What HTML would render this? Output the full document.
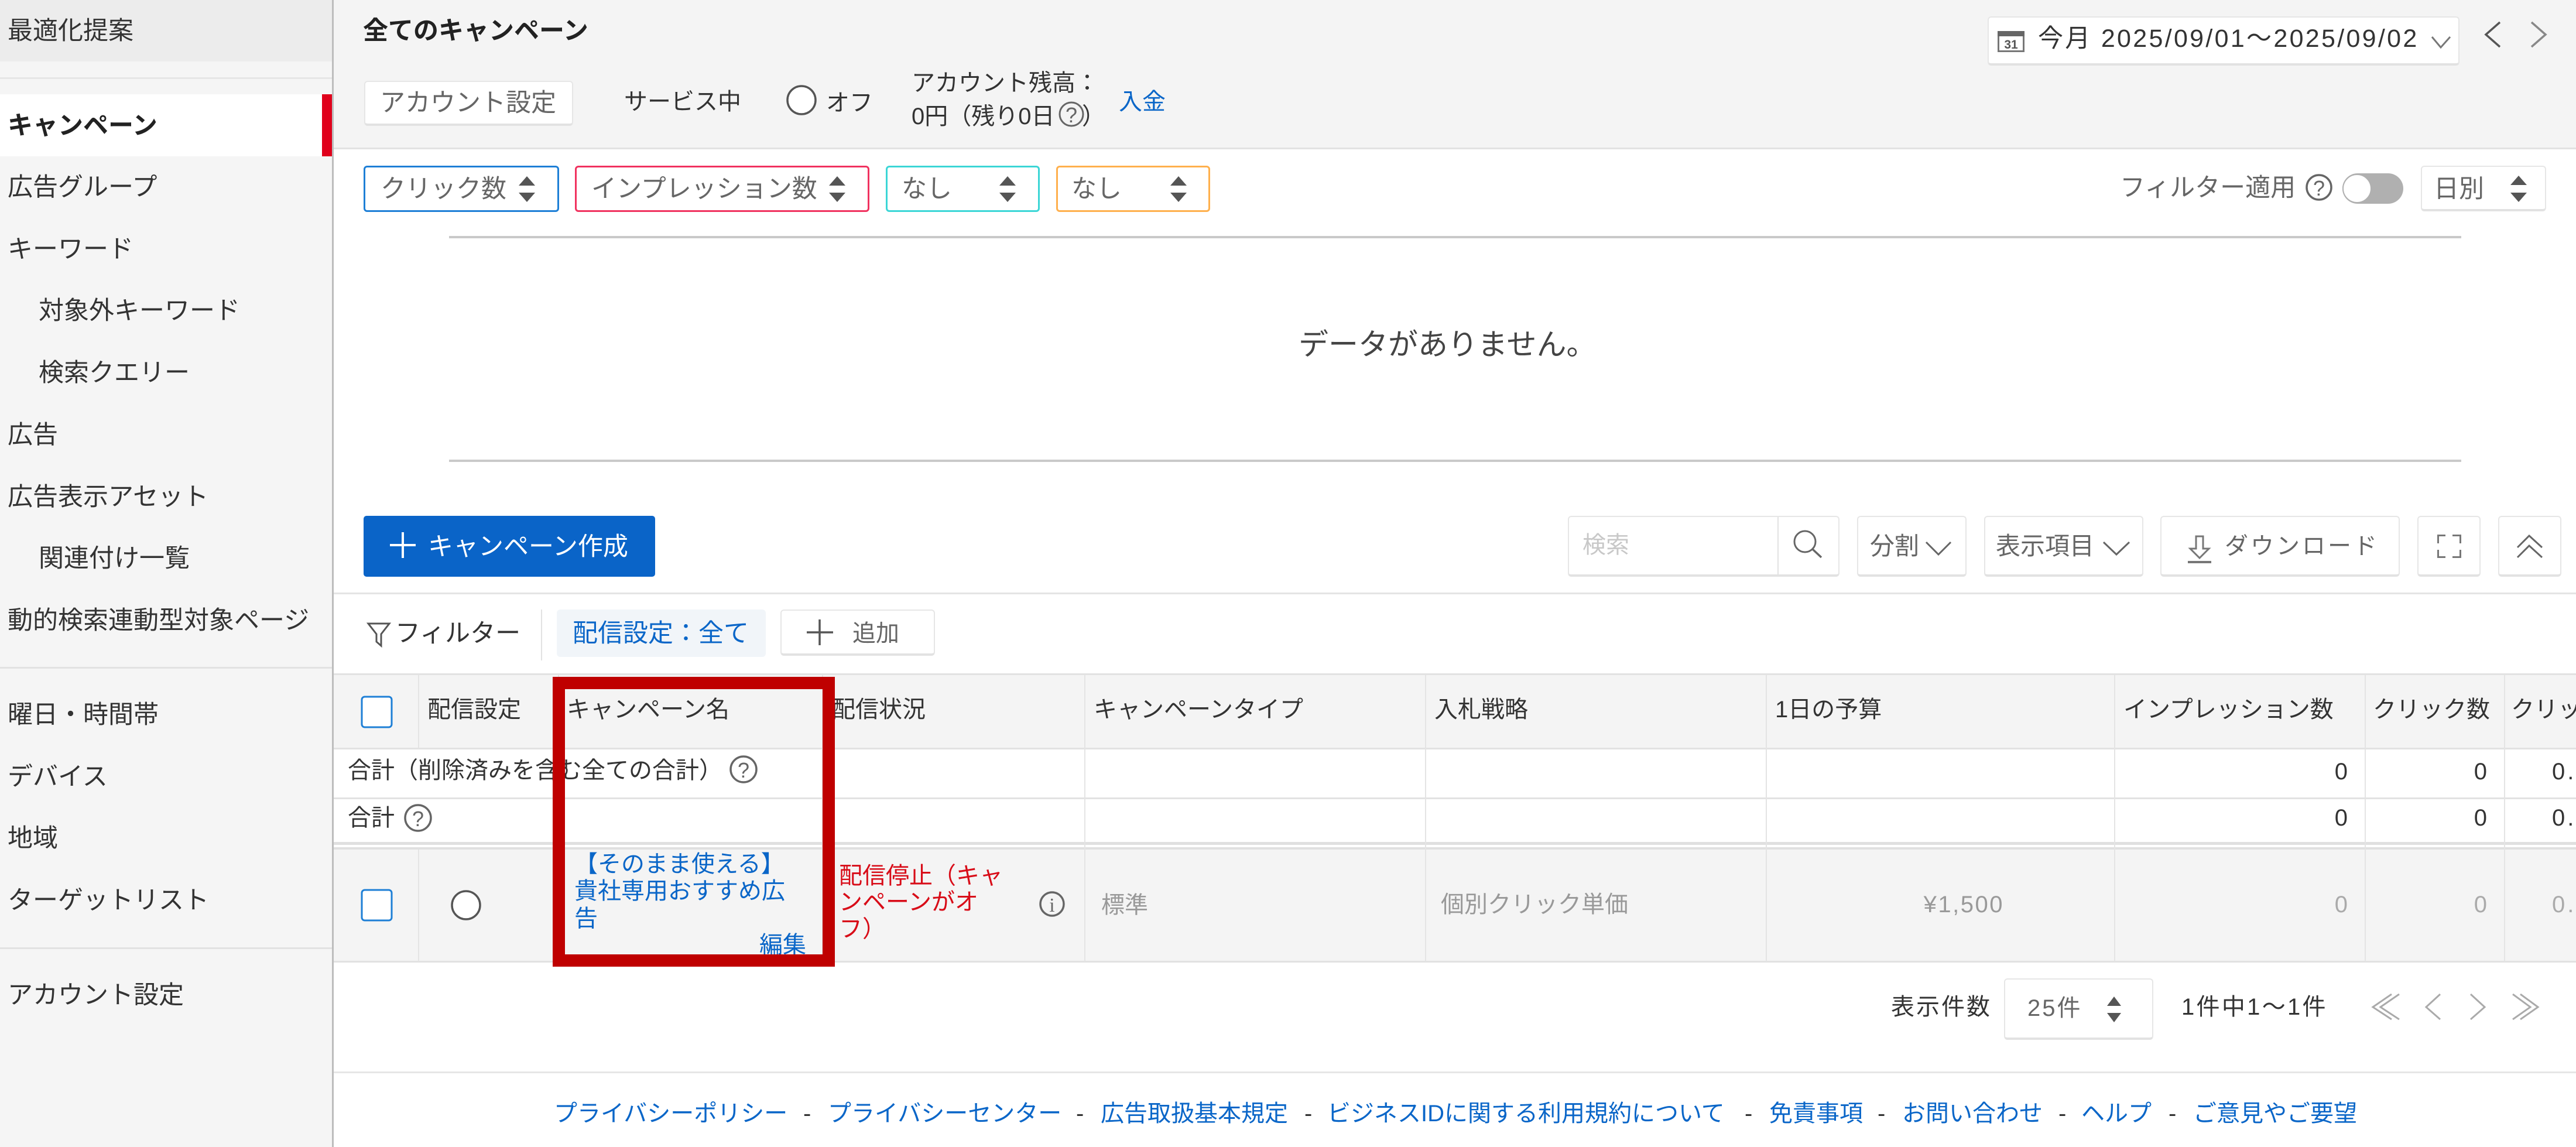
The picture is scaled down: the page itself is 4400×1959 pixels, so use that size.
<!DOCTYPE html>
<html lang="ja">
<head>
<meta charset="utf-8">
<title>全てのキャンペーン</title>
<style>
html,body{margin:0;padding:0;background:#fff}
body{position:relative;width:4400px;height:1959px;overflow:hidden;font-family:"Liberation Sans","Noto Sans CJK JP",sans-serif;font-size:43px;color:#333}
.t{position:absolute;white-space:nowrap;height:60px;line-height:60px;margin-top:-27px;margin-left:-2px}
.b{position:absolute;box-sizing:border-box}
.btn{position:absolute;box-sizing:border-box;background:#fff;border:2px solid #e6e6e6;border-bottom:4px solid #e2e2e2;border-radius:6px}
.chip{position:absolute;box-sizing:border-box;background:#fff;border-radius:6px;top:283px;height:79px;border-width:3px;border-style:solid}
.s{font-size:40px;margin-top:-30px;margin-left:0}
.g{color:#666}
.k{color:#333}
.l{color:#0a66c8}
.f{font-size:40px;color:#0a66c8;margin-top:-30px;margin-left:0}
.d{font-size:40px;color:#333;margin-top:-30px;margin-left:0}
.n{position:absolute;white-space:nowrap;height:60px;line-height:60px;margin-top:-30px;text-align:right;font-size:40px}
svg{position:absolute;left:0;top:0}
</style>
</head>
<body>
<!-- sidebar -->
<div class="b" style="left:0;top:0;width:567px;height:1959px;background:#f5f5f5"></div>
<div class="b" style="left:567px;top:0;width:3px;height:1959px;background:#bdbdbd"></div>
<div class="b" style="left:0;top:0;width:567px;height:105px;background:#ececec"></div>
<div class="b" style="left:0;top:132px;width:567px;height:3px;background:#e6e6e6"></div>
<div class="b" style="left:0;top:161px;width:567px;height:106px;background:#fff"></div>
<div class="b" style="left:550px;top:161px;width:17px;height:106px;background:#e0001b"></div>
<div class="b" style="left:0;top:1139px;width:567px;height:3px;background:#e2e2e2"></div>
<div class="b" style="left:0;top:1618px;width:567px;height:3px;background:#e2e2e2"></div>
<div class="t" style="left:15px;top:50px">最適化提案</div>
<div class="t" style="left:15px;top:212px;font-weight:700;color:#222">キャンペーン</div>
<div class="t" style="left:15px;top:317px">広告グループ</div>
<div class="t" style="left:15px;top:423px">キーワード</div>
<div class="t" style="left:68px;top:528px">対象外キーワード</div>
<div class="t" style="left:68px;top:634px">検索クエリー</div>
<div class="t" style="left:15px;top:740px">広告</div>
<div class="t" style="left:15px;top:846px">広告表示アセット</div>
<div class="t" style="left:68px;top:951px">関連付け一覧</div>
<div class="t" style="left:15px;top:1057px">動的検索連動型対象ページ</div>
<div class="t" style="left:15px;top:1218px">曜日・時間帯</div>
<div class="t" style="left:15px;top:1324px">デバイス</div>
<div class="t" style="left:15px;top:1429px">地域</div>
<div class="t" style="left:15px;top:1535px">ターゲットリスト</div>
<div class="t" style="left:15px;top:1697px">アカウント設定</div>

<!-- top header -->
<div class="b" style="left:570px;top:0;width:3830px;height:252px;background:#f4f4f4"></div>
<div class="b" style="left:570px;top:252px;width:3830px;height:3px;background:#e2e2e2"></div>
<div class="t" style="left:622px;top:50px;font-weight:700;color:#222">全てのキャンペーン</div>
<div class="btn" style="left:622px;top:138px;width:357px;height:77px"></div>
<div class="t g" style="left:651px;top:173px">アカウント設定</div>
<div class="t k" style="left:1068px;top:171px;font-size:40px">サービス中</div>
<div class="t k" style="left:1413px;top:173px;font-size:40px">オフ</div>
<div class="t k" style="left:1559px;top:139px;font-size:40px">アカウント残高：</div>
<div class="t k" style="left:1559px;top:196px;font-size:40px">0円（残り0日</div>
<div class="t k" style="left:1850px;top:196px;font-size:40px">）</div>
<div class="t l" style="left:1913px;top:171px;font-size:40px">入金</div>

<div class="btn" style="left:3395px;top:28px;width:806px;height:84px"></div>
<div class="t k" style="left:3483px;top:63px;letter-spacing:3.3px">今月 2025/09/01～2025/09/02</div>

<!-- chart controls -->
<div class="chip" style="left:621px;width:334px;border-color:#1e7fd6"></div>
<div class="chip" style="left:982px;width:503px;border-color:#f0325f"></div>
<div class="chip" style="left:1513px;width:263px;border-color:#3cd6d6"></div>
<div class="chip" style="left:1804px;width:263px;border-color:#ffb04d"></div>
<div class="t g" style="left:652px;top:320px">クリック数</div>
<div class="t g" style="left:1012px;top:320px">インプレッション数</div>
<div class="t g" style="left:1542px;top:320px">なし</div>
<div class="t g" style="left:1832px;top:320px">なし</div>
<div class="t g" style="left:3623px;top:318px;font-size:43px">フィルター適用</div>
<div class="btn" style="left:4135px;top:283px;width:214px;height:78px"></div>
<div class="t g" style="left:4159px;top:320px">日別</div>

<!-- chart -->
<div class="b" style="left:767px;top:403px;width:3437px;height:4px;background:#c9c9c9"></div>
<div class="b" style="left:767px;top:785px;width:3437px;height:4px;background:#c9c9c9"></div>
<div class="t" style="left:2220px;top:586px;font-size:51px;color:#444">データがありません。</div>

<!-- toolbar -->
<div class="b" style="left:621px;top:881px;width:498px;height:104px;background:#0a64c8;border-radius:5px"></div>
<div class="t" style="left:733px;top:931px;color:#fff">キャンペーン作成</div>
<div class="btn" style="left:2678px;top:881px;width:464px;height:104px"></div>
<div class="b" style="left:3036px;top:883px;width:2px;height:100px;background:#e2e2e2"></div>
<div class="t" style="left:2705px;top:928px;font-size:40px;color:#c8c8c8">検索</div>
<div class="btn" style="left:3172px;top:881px;width:187px;height:104px"></div>
<div class="t g" style="left:3196px;top:930px;font-size:42px">分割</div>
<div class="btn" style="left:3389px;top:881px;width:272px;height:104px"></div>
<div class="t g" style="left:3411px;top:930px;font-size:42px">表示項目</div>
<div class="btn" style="left:3690px;top:881px;width:409px;height:104px"></div>
<div class="t g" style="left:3802px;top:930px;font-size:40px;letter-spacing:4px">ダウンロード</div>
<div class="btn" style="left:4129px;top:881px;width:108px;height:104px"></div>
<div class="btn" style="left:4267px;top:881px;width:108px;height:104px"></div>
<div class="b" style="left:570px;top:1012px;width:3830px;height:3px;background:#e4e4e4"></div>

<!-- filter row -->
<div class="t k" style="left:677px;top:1079px">フィルター</div>
<div class="b" style="left:924px;top:1041px;width:2px;height:87px;background:#e2e2e2"></div>
<div class="b" style="left:951px;top:1041px;width:357px;height:81px;background:#f1f5f9;border-radius:6px"></div>
<div class="t l" style="left:980px;top:1079px;font-size:43px">配信設定：全て</div>
<div class="btn" style="left:1333px;top:1041px;width:264px;height:79px"></div>
<div class="t g" style="left:1458px;top:1079px;font-size:40px">追加</div>

<!-- table -->
<div class="b" style="left:570px;top:1151px;width:3830px;height:127px;background:#f4f4f4"></div>
<div class="b" style="left:570px;top:1449px;width:3830px;height:193px;background:#f4f4f4"></div>
<div class="b" style="left:570px;top:1150px;width:3830px;height:3px;background:#e2e2e2"></div>
<div class="b" style="left:570px;top:1277px;width:3830px;height:3px;background:#e2e2e2"></div>
<div class="b" style="left:570px;top:1362px;width:3830px;height:3px;background:#e2e2e2"></div>
<div class="b" style="left:570px;top:1438px;width:3830px;height:5px;background:#e0e0e0"></div>
<div class="b" style="left:570px;top:1447px;width:3830px;height:4px;background:#e0e0e0"></div>
<div class="b" style="left:570px;top:1641px;width:3830px;height:3px;background:#e2e2e2"></div>
<!-- col lines -->
<div class="b" style="left:714px;top:1153px;width:2px;height:125px;background:#e4e4e4"></div>
<div class="b" style="left:714px;top:1451px;width:2px;height:190px;background:#e4e4e4"></div>
<div class="b" style="left:953px;top:1153px;width:2px;height:125px;background:#e4e4e4"></div>
<div class="b" style="left:953px;top:1451px;width:2px;height:190px;background:#e4e4e4"></div>
<div class="b" style="left:1404px;top:1153px;width:2px;height:488px;background:#e4e4e4"></div>
<div class="b" style="left:1852px;top:1153px;width:2px;height:488px;background:#e4e4e4"></div>
<div class="b" style="left:2434px;top:1153px;width:2px;height:488px;background:#e4e4e4"></div>
<div class="b" style="left:3016px;top:1153px;width:2px;height:488px;background:#e4e4e4"></div>
<div class="b" style="left:3611px;top:1153px;width:2px;height:488px;background:#e4e4e4"></div>
<div class="b" style="left:4039px;top:1153px;width:2px;height:488px;background:#e4e4e4"></div>
<div class="b" style="left:4277px;top:1153px;width:2px;height:488px;background:#e4e4e4"></div>

<div class="t d" style="left:730px;top:1212px">配信設定</div>
<div class="t d" style="left:968px;top:1212px">キャンペーン名</div>
<div class="t d" style="left:1421px;top:1212px">配信状況</div>
<div class="t d" style="left:1868px;top:1212px">キャンペーンタイプ</div>
<div class="t d" style="left:2450px;top:1212px">入札戦略</div>
<div class="t d" style="left:3032px;top:1212px">1日の予算</div>
<div class="t d" style="left:3627px;top:1212px">インプレッション数</div>
<div class="t d" style="left:4053px;top:1212px">クリック数</div>
<div class="t d" style="left:4289px;top:1212px">クリック率</div>

<div class="t d" style="left:594px;top:1316px">合計（削除済みを含む全ての合計）</div>
<div class="t d" style="left:594px;top:1397px">合計</div>

<div class="n k" style="right:390px;top:1318px">0</div>
<div class="n k" style="right:152px;top:1318px">0</div>
<div class="t d" style="left:4359px;top:1318px;letter-spacing:4px">0.00</div>
<div class="n k" style="right:390px;top:1397px">0</div>
<div class="n k" style="right:152px;top:1397px">0</div>
<div class="t d" style="left:4359px;top:1397px;letter-spacing:4px">0.00</div>

<div class="t l s" style="left:981px;top:1476px">【そのまま使える】</div>
<div class="t l s" style="left:981px;top:1522px">貴社専用おすすめ広</div>
<div class="t l s" style="left:981px;top:1569px">告</div>
<div class="t l s" style="left:1297px;top:1614px">編集</div>
<div class="t s" style="left:1433px;top:1496px;color:#d80c18">配信停止（キャ</div>
<div class="t s" style="left:1433px;top:1541px;color:#d80c18">ンペーンがオ</div>
<div class="t s" style="left:1433px;top:1587px;color:#d80c18">フ）</div>
<div class="t s" style="left:1881px;top:1546px;color:#999">標準</div>
<div class="t s" style="left:2461px;top:1545px;color:#999">個別クリック単価</div>
<div class="n" style="right:977px;top:1545px;color:#999;letter-spacing:2.5px">¥1,500</div>
<div class="n" style="right:390px;top:1545px;color:#aaa">0</div>
<div class="n" style="right:152px;top:1545px;color:#aaa">0</div>
<div class="t s" style="left:4359px;top:1545px;color:#aaa;letter-spacing:4px">0.00</div>

<!-- pagination -->
<div class="t d" style="left:3230px;top:1720px;letter-spacing:3px">表示件数</div>
<div class="btn" style="left:3423px;top:1671px;width:255px;height:105px"></div>
<div class="t g" style="left:3465px;top:1719px;font-size:40px;letter-spacing:3px">25件</div>
<div class="t d" style="left:3726px;top:1720px;letter-spacing:3.3px">1件中1～1件</div>

<!-- footer -->
<div class="b" style="left:570px;top:1830px;width:3830px;height:3px;background:#e6e6e6"></div>
<div class="t f" style="left:946px;top:1902px">プライバシーポリシー</div>
<div class="t d" style="left:1372px;top:1902px">-</div>
<div class="t f" style="left:1414px;top:1902px">プライバシーセンター</div>
<div class="t d" style="left:1838px;top:1902px">-</div>
<div class="t f" style="left:1880px;top:1902px">広告取扱基本規定</div>
<div class="t d" style="left:2228px;top:1902px">-</div>
<div class="t f" style="left:2267px;top:1902px">ビジネスIDに関する利用規約について</div>
<div class="t d" style="left:2980px;top:1902px">-</div>
<div class="t f" style="left:3022px;top:1902px">免責事項</div>
<div class="t d" style="left:3207px;top:1902px">-</div>
<div class="t f" style="left:3249px;top:1902px">お問い合わせ</div>
<div class="t d" style="left:3516px;top:1902px">-</div>
<div class="t f" style="left:3555px;top:1902px">ヘルプ</div>
<div class="t d" style="left:3704px;top:1902px">-</div>
<div class="t f" style="left:3746px;top:1902px">ご意見やご要望</div>

<!-- icons -->
<svg width="4400" height="1959" viewBox="0 0 4400 1959" fill="none">
  <!-- radio off header -->
  <circle cx="1369" cy="171" r="24" stroke="#555" stroke-width="3.5" fill="#fff"/>
  <!-- help inline in balance -->
  <circle cx="1830" cy="195" r="20" stroke="#666" stroke-width="3"/>
  <text x="1830" y="209" font-size="36" fill="#666" text-anchor="middle" font-family="Liberation Sans">?</text>
  <!-- calendar -->
  <rect x="3413.5" y="54.5" width="43" height="33" fill="#fff" stroke="#777" stroke-width="3"/>
  <rect x="3412" y="53" width="46" height="9" fill="#666"/>
  <text x="3435" y="83" font-size="21" font-weight="700" fill="#555" text-anchor="middle" font-family="Liberation Sans">31</text>
  <path d="M4154 63L4169 81L4185 63" stroke="#777" stroke-width="3"/>
  <path d="M4270 38L4246 59L4270 80" stroke="#555" stroke-width="3.5"/>
  <path d="M4324 38L4348 59L4324 80" stroke="#888" stroke-width="3.5"/>
  <!-- updown arrows -->
  <g fill="#555">
    <path d="M900 301L914 317H886Z"/><path d="M900 345L914 329H886Z"/>
    <path d="M1430 301L1444 317H1416Z"/><path d="M1430 345L1444 329H1416Z"/>
    <path d="M1721 301L1735 317H1707Z"/><path d="M1721 345L1735 329H1707Z"/>
    <path d="M2013 301L2027 317H1999Z"/><path d="M2013 345L2027 329H1999Z"/>
    <path d="M4302 300L4316 316H4288Z"/><path d="M4302 345L4316 329H4288Z"/>
    <path d="M3611 1702L3623 1718H3599Z"/><path d="M3611 1746L3623 1730H3599Z"/>
  </g>
  <!-- filter help + toggle -->
  <circle cx="3961" cy="320" r="21" stroke="#666" stroke-width="3.5"/>
  <text x="3961" y="334" font-size="36" fill="#666" text-anchor="middle" font-family="Liberation Sans">?</text>
  <rect x="4001" y="296" width="104" height="52" rx="26" fill="#b0b0b0"/>
  <circle cx="4026" cy="322" r="24" fill="#fff" stroke="#b0b0b0" stroke-width="2"/>
  <!-- plus create -->
  <path d="M666 931H710M688 909V953" stroke="#fff" stroke-width="4"/>
  <!-- magnifier -->
  <circle cx="3083" cy="925" r="18" stroke="#666" stroke-width="3"/>
  <path d="M3096 938L3111 952" stroke="#666" stroke-width="3.5"/>
  <!-- chevrons -->
  <path d="M3290 926L3311 947L3332 926" stroke="#666" stroke-width="3"/>
  <path d="M3593 926L3615 947L3637 926" stroke="#666" stroke-width="3"/>
  <!-- download -->
  <path d="M3751 916H3763V937H3773L3757 953L3741 937H3751Z" stroke="#777" stroke-width="3"/>
  <path d="M3737 960H3777" stroke="#777" stroke-width="4"/>
  <!-- fullscreen -->
  <path d="M4177 914.5H4164.5V928M4189 914.5H4202.5V928M4177 951.5H4164.5V939M4189 951.5H4202.5V939" stroke="#777" stroke-width="3"/>
  <!-- collapse -->
  <path d="M4300 935L4320 915L4342 935M4300 952L4320 932L4342 952" stroke="#666" stroke-width="3"/>
  <!-- funnel -->
  <path d="M629 1065H665L651 1083V1103L643 1096V1083Z" stroke="#555" stroke-width="3"/>
  <!-- add plus -->
  <path d="M1378 1080H1423M1400 1058V1102" stroke="#555" stroke-width="3.5"/>
  <!-- checkboxes -->
  <rect x="618" y="1190" width="51" height="52" rx="5" fill="#fff" stroke="#1e7fd6" stroke-width="3"/>
  <rect x="618" y="1520" width="51" height="52" rx="5" fill="#fff" stroke="#1e7fd6" stroke-width="3"/>
  <circle cx="796" cy="1546" r="24" fill="#fff" stroke="#555" stroke-width="3.5"/>
  <!-- help icons table -->
  <circle cx="1270" cy="1314" r="22" stroke="#666" stroke-width="3.5" fill="#fff"/>
  <text x="1270" y="1328" font-size="36" fill="#666" text-anchor="middle" font-family="Liberation Sans">?</text>
  <circle cx="714" cy="1397" r="22" stroke="#666" stroke-width="3.5"/>
  <text x="714" y="1411" font-size="36" fill="#666" text-anchor="middle" font-family="Liberation Sans">?</text>
  <!-- info -->
  <circle cx="1797" cy="1544" r="20" stroke="#666" stroke-width="3.5"/>
  <text x="1797" y="1557" font-size="34" fill="#666" text-anchor="middle" font-family="Liberation Serif">i</text>
  <!-- pagination chevrons -->
  <g stroke="#aaa" stroke-width="3">
    <path d="M4085 1698L4053 1720L4085 1741M4098 1698L4066 1720L4098 1741"/>
    <path d="M4168 1698L4144 1720L4168 1741"/>
    <path d="M4220 1698L4244 1720L4220 1741"/>
    <path d="M4292 1698L4322 1720L4292 1741M4305 1698L4335 1720L4305 1741"/>
  </g>
  <!-- red highlight -->
  <rect x="954.5" y="1166.5" width="461" height="474" stroke="#bf0000" stroke-width="21"/>
</svg>
</body>
</html>
